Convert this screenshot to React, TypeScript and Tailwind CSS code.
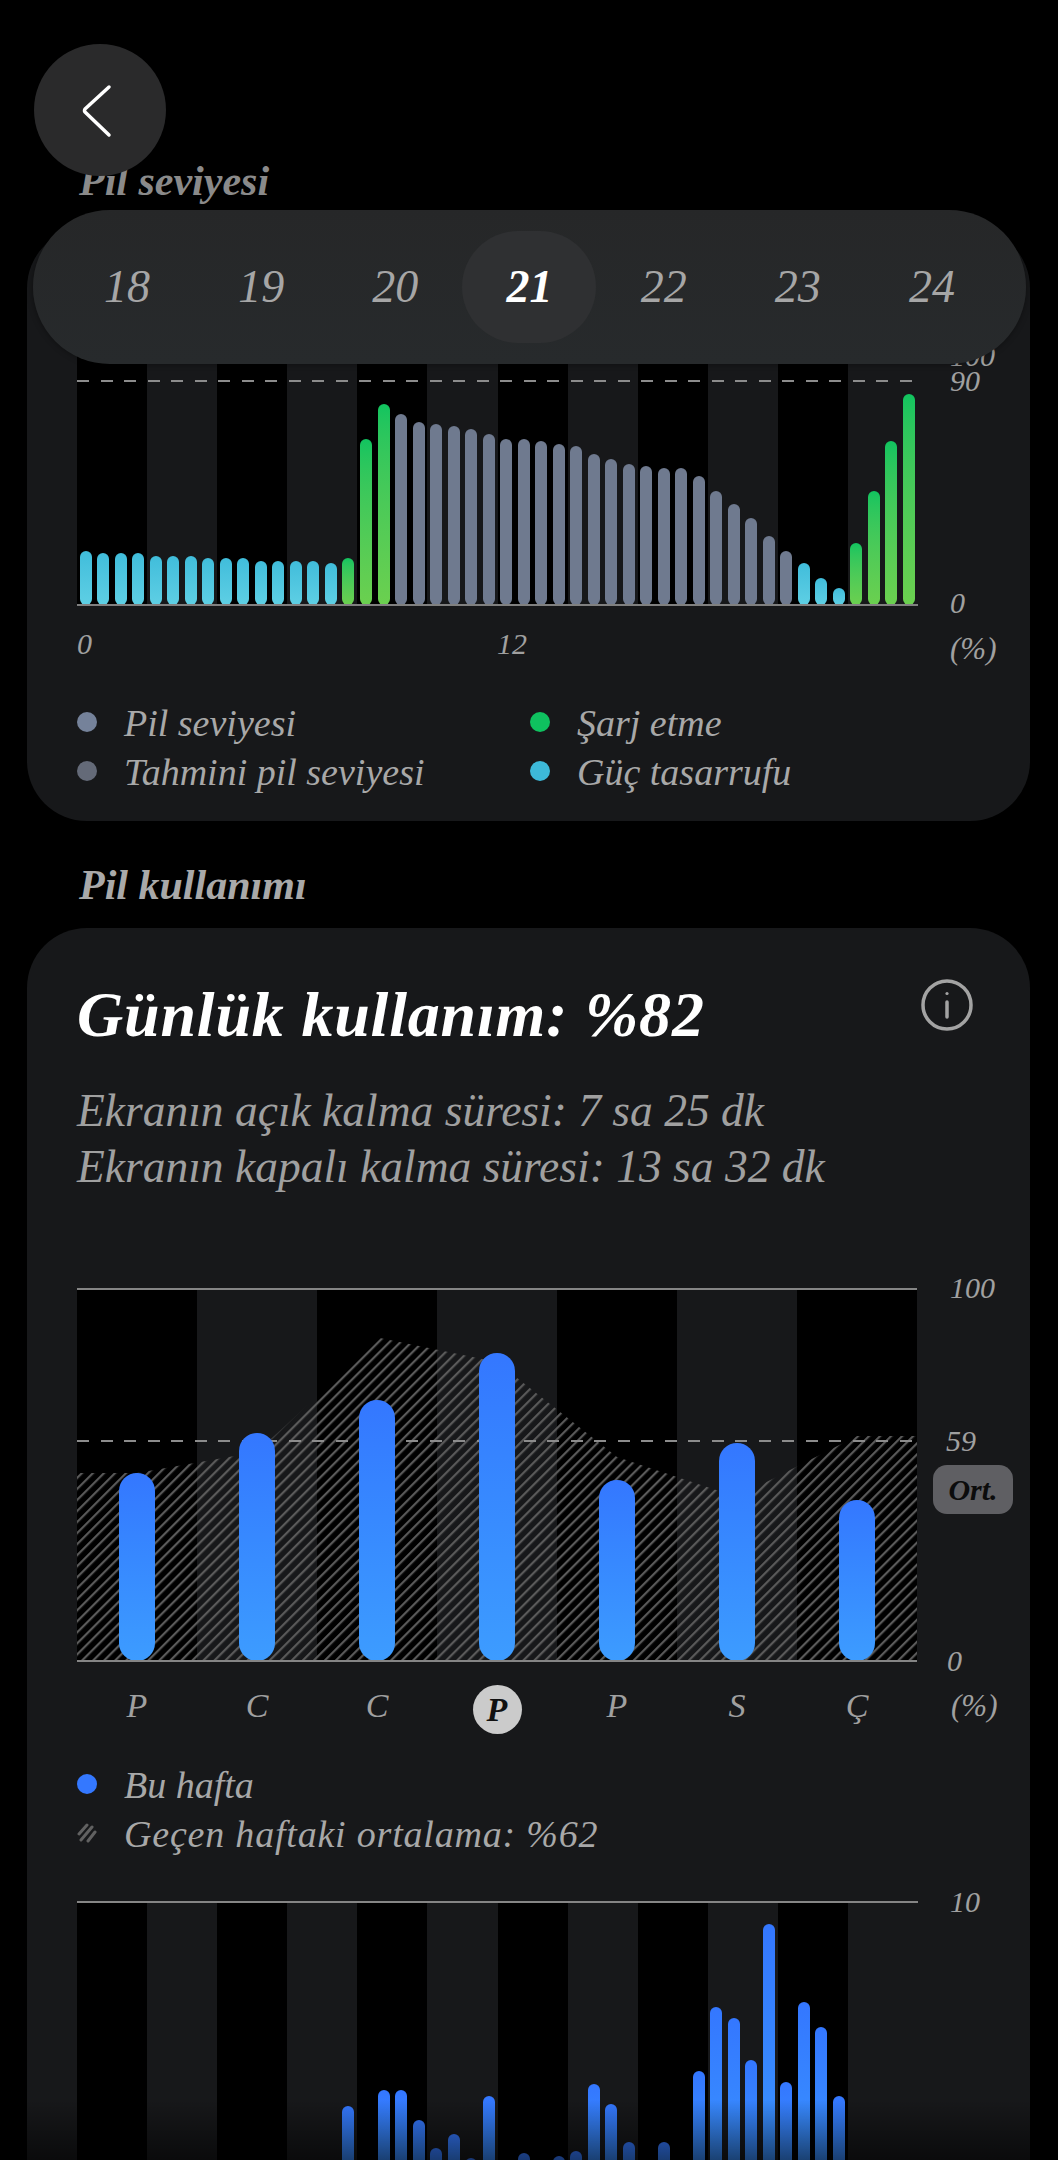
const level: [number, string][] = [
  [54, "c"], [52, "c"], [52, "c"], [52, "c"], [49, "c"], [49, "c"], [49, "c"], [47, "c"], [47, "c"], [47, "c"],
  [44, "c"], [44, "c"], [44, "c"], [44, "c"], [42, "c"], [47, "g"], [166, "g"], [201, "g"],
  [191, "s"], [183, "s"], [181, "s"], [179, "s"], [176, "s"], [171, "s"], [166, "s"], [166, "s"], [164, "s"],
  [161, "s"], [159, "s"], [151, "s"], [146, "s"], [141, "s"], [139, "s"], [137, "s"], [137, "s"], [129, "s"],
  [114, "s"], [101, "s"], [87, "s"], [69, "s"], [54, "s"], [42, "c"], [27, "c"], [17, "c"],
  [62, "g"], [114, "g"], [164, "g"], [211, "g"],
];

const weekBars = [188, 228, 261, 308, 181, 218, 161];
const days = ["P", "C", "C", "P", "P", "S", "Ç"];

const hourly: Record<number, number> = {
  15: 2107, 17: 2091, 18: 2091, 19: 2121, 20: 2149, 21: 2135, 22: 2159, 23: 2097, 25: 2154, 27: 2157, 28: 2152,
  29: 2085, 30: 2105, 31: 2143, 33: 2143, 35: 2072, 36: 2008, 37: 2019, 38: 2061, 39: 1925, 40: 2083, 41: 2003,
  42: 2028, 43: 2097,
};

const dashed = "h-[2px] bg-[repeating-linear-gradient(90deg,#8c8c8c_0_12px,transparent_12px_23.5px)]";

function Stripes({ n }: { n: number }) {
  return (
    <div className={n === 12 ? "absolute inset-0 grid grid-cols-12" : "absolute inset-0 grid grid-cols-7"}>
      {Array.from({ length: n }, (_, i) => (
        <div key={i} className={i % 2 === 0 ? "bg-black" : "bg-[#17181a]"} />
      ))}
    </div>
  );
}

function barClass(kind: string) {
  if (kind === "c") return "bg-gradient-to-b from-[#40bddb] to-[#5ecfe4]";
  if (kind === "g") return "bg-gradient-to-b from-[#10c45f] to-[#6bd04f]";
  return "bg-[#6f7a8f]";
}

function Legend({ color, label }: { color: string; label: string }) {
  return (
    <div className="flex h-[49px] items-center gap-[27px]">
      <span className={`h-[20px] w-[20px] rounded-full ${color}`} />
      <span className="pt-[2px] text-[38px] leading-none text-[#a8a8a8]">{label}</span>
    </div>
  );
}

export default function App() {
  return (
    <div className="relative h-[2160px] w-[1058px] overflow-hidden bg-black font-['Liberation_Serif',serif] italic">
      <main className="pt-[158px]">
        <h2 className="ml-[79px] h-[47px] text-[42px] font-bold leading-[47px] text-[#8a8a8a]">Pil seviyesi</h2>

        <section className="ml-[27px] mt-[23px] h-[593px] w-[1003px] rounded-[60px] bg-[#17181a] pl-[50px] pt-[128px]">
          <div className="relative h-[249px] w-[841px]">
            <Stripes n={12} />
            <div className={`absolute inset-x-0 top-[24px] ${dashed}`} />
            <div className="absolute inset-0 flex items-end">
              {level.map(([h, k], i) => (
                <div key={i} className="flex flex-1 justify-center">
                  <div className={`w-[12px] rounded-full ${barClass(k)}`} style={{ height: h }} />
                </div>
              ))}
            </div>
            <div className="absolute inset-x-0 bottom-[-1px] h-[2px] bg-[#808080]" />
            <span className="absolute left-[873px] top-[-15px] text-[30px] leading-[30px] text-[#a0a0a0]">100</span>
            <span className="absolute left-[873px] top-[10px] text-[30px] leading-[30px] text-[#a0a0a0]">90</span>
            <span className="absolute left-[873px] top-[232px] text-[30px] leading-[30px] text-[#a0a0a0]">0</span>
          </div>
          <div className="mt-[22px] flex h-[34px] items-center text-[30px] leading-none text-[#a0a0a0]">
            <span className="w-[420px]">0</span>
            <span className="w-[453px]">12</span>
            <span className="pt-[8px] text-[31px]">(%)</span>
          </div>
          <div className="mt-[36px] grid w-[800px] grid-cols-[453px_1fr]">
            <Legend color="bg-[#75829a]" label="Pil seviyesi" />
            <Legend color="bg-[#0fc15f]" label="Şarj etme" />
            <Legend color="bg-[#646a78]" label="Tahmini pil seviyesi" />
            <Legend color="bg-[#3db9d9]" label="Güç tasarrufu" />
          </div>
        </section>

        <h2 className="ml-[79px] mt-[41px] h-[47px] text-[42px] font-bold leading-[47px] text-[#a9a9a9]">Pil kullanımı</h2>

        <section className="relative ml-[27px] mt-[19px] h-[1300px] w-[1003px] rounded-t-[60px] bg-[#17181a] pl-[50px] pt-[55px]">
          <div className="flex h-[64px] w-[896px] items-start justify-between">
            <h1 className="text-[64px] font-bold leading-[64px] tracking-[0.8px] text-white">Günlük kullanım: %82</h1>
            <svg className="-mt-[4px]" width="52" height="52" viewBox="0 0 52 52" fill="none" stroke="#a3a3a3" strokeWidth="3.5" strokeLinecap="round">
              <circle cx="26" cy="26" r="24" />
              <path d="M26 23v15" />
              <circle cx="26" cy="14.5" r="1.6" fill="#a3a3a3" stroke="none" />
            </svg>
          </div>
          <div className="mt-[36px] text-[45.5px] leading-[56px] text-[#a0a0a0]">
            <p>Ekranın açık kalma süresi: 7 sa 25 dk</p>
            <p>Ekranın kapalı kalma süresi: 13 sa 32 dk</p>
          </div>

          <div className="relative mt-[94px] h-[372px] w-[840px]">
            <Stripes n={7} />
            <svg className="absolute inset-0" width="840" height="372" viewBox="0 0 840 372">
              <defs>
                <pattern id="hatch" width="7.8" height="7.8" patternUnits="userSpaceOnUse" patternTransform="rotate(45)">
                  <rect width="2.2" height="7.8" fill="#5a5a5a" />
                </pattern>
              </defs>
              <polygon
                fill="url(#hatch)"
                points="0,184 60,184 180,163 303,49 420,73 540,168 660,208 780,147 840,147 840,372 0,372"
              />
            </svg>
            <div className={`absolute inset-x-0 top-[151px] ${dashed}`} />
            <div className="absolute inset-0 grid grid-cols-7 items-end">
              {weekBars.map((h, i) => (
                <div key={i} className="flex justify-center">
                  <div className="w-[36px] rounded-full bg-gradient-to-b from-[#3477ff] to-[#3d9cff]" style={{ height: h }} />
                </div>
              ))}
            </div>
            <div className="absolute inset-x-0 top-[-1px] h-[2px] bg-[#858585]" />
            <div className="absolute inset-x-0 bottom-[-1px] h-[2px] bg-[#858585]" />
            <span className="absolute left-[873px] top-[-16px] text-[30px] leading-[30px] text-[#a0a0a0]">100</span>
            <span className="absolute left-[869px] top-[137px] text-[30px] leading-[30px] text-[#a0a0a0]">59</span>
            <span className="absolute left-[856px] top-[176px] flex h-[49px] w-[80px] items-center justify-center rounded-[14px] bg-[#5f5f63] text-[30px] font-bold leading-none text-[#0c0c0c]">Ort.</span>
            <span className="absolute left-[870px] top-[357px] text-[30px] leading-[30px] text-[#a0a0a0]">0</span>
          </div>

          <div className="relative mt-[24px] grid h-[48px] w-[840px] grid-cols-7 items-center text-center text-[34px] leading-none text-[#a0a0a0]">
            {days.map((d, i) =>
              i === 3 ? (
                <span key={i} className="mx-auto flex h-[49px] w-[49px] items-center justify-center rounded-full bg-[#cbcbcb] font-bold text-[#111]">{d}</span>
              ) : (
                <span key={i} className="pb-[8px]">{d}</span>
              )
            )}
            <span className="absolute left-[874px] top-[5px] text-[31px]">(%)</span>
          </div>

          <div className="mt-[26px]">
            <Legend color="bg-[#3478ff]" label="Bu hafta" />
            <div className="flex h-[49px] items-center gap-[27px]">
              <svg width="20" height="20" viewBox="0 0 20 20" stroke="#616161" strokeWidth="3" strokeLinecap="round">
                <path d="M2 11 10 2M4 17 15 4M11 18 18 9" />
              </svg>
              <span className="pt-[2px] text-[38px] leading-none tracking-[0.8px] text-[#a8a8a8]">Geçen haftaki ortalama: %62</span>
            </div>
          </div>

          <div className="relative mt-[45px] h-[280px] w-[841px]">
            <Stripes n={12} />
            <div className="absolute inset-x-0 top-[-1px] h-[2px] bg-[#858585]" />
            <div className="absolute inset-0 flex items-end">
              {Array.from({ length: 48 }, (_, i) => (
                <div key={i} className="flex flex-1 justify-center">
                  {hourly[i] ? (
                    <div
                      className="w-[12px] rounded-t-full bg-gradient-to-b from-[#3477ff] to-[#3b94ff]"
                      style={{ height: 2183 - hourly[i] }}
                    />
                  ) : null}
                </div>
              ))}
            </div>
            <span className="absolute left-[873px] top-[-15px] text-[30px] leading-[30px] text-[#a0a0a0]">10</span>
          </div>
        </section>
      </main>

      <div className="pointer-events-none absolute inset-x-0 bottom-0 h-[60px] bg-gradient-to-b from-transparent to-black/55" />

      <button className="absolute left-[34px] top-[44px] flex h-[132px] w-[132px] items-center justify-center rounded-full bg-[#2a2a2b]">
        <svg width="132" height="132" viewBox="0 0 132 132" fill="none" stroke="#fff" strokeWidth="3.5" strokeLinecap="round" strokeLinejoin="round">
          <path d="M75 43 51 65q-1 2 0 3l24 23" />
        </svg>
      </button>

      <nav className="absolute left-[33px] top-[210px] flex h-[154px] w-[993px] items-center rounded-full bg-gradient-to-b from-[#262728] to-[#272a2c] px-[27px] shadow-[0_0_6px_rgba(0,0,0,0.4)]">
        {["18", "19", "20", "21", "22", "23", "24"].map((d) => (
          <div key={d} className="flex flex-1 justify-center">
            <span
              className={
                d === "21"
                  ? "flex h-[112px] w-[134px] items-center justify-center rounded-full bg-[#2f3032] text-[46px] font-bold leading-none text-white"
                  : "flex h-[112px] w-[134px] items-center justify-center text-[46px] leading-none text-[#a6a6a6]"
              }
            >
              {d}
            </span>
          </div>
        ))}
      </nav>
    </div>
  );
}
